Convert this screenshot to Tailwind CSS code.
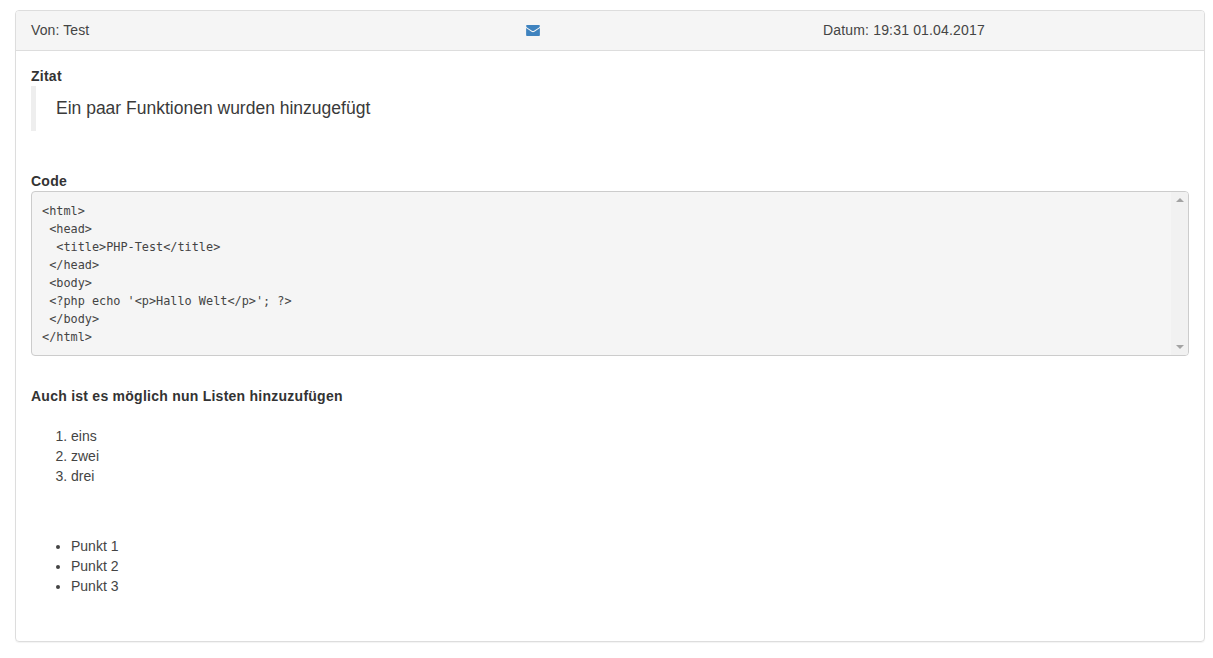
<!DOCTYPE html>
<html lang="de">
<head>
  <meta charset="UTF-8" />
  <meta name="viewport" content="width=device-width, initial-scale=1.0" />
  <title>Nachricht</title>
  <script src="https://cdn.jsdelivr.net/npm/@tailwindcss/browser@4"></script>
</head>
<body class="bg-white font-['Liberation_Sans',Arial,sans-serif] text-[14px] leading-[20px] text-[#333]">
  <div class="pt-[10px] px-[15px] pb-[16px]">
    <!-- Panel -->
    <div class="h-[632px] w-[1190px] border border-[#ddd] rounded-[4px] shadow-[0_1px_1px_rgba(0,0,0,0.05)] overflow-hidden">
      <!-- Header -->
      <div class="h-[40px] bg-[#f5f5f5] border-b border-[#ddd] px-[15px] pt-[9px] pb-[10px] grid grid-cols-[495px_297px_1fr] text-[#444]">
        <div class="tracking-[0.1px]">Von: Test</div>
        <div class="flex items-center">
          <svg class="w-[14px] h-[11px] text-[#3f83bf]" viewBox="0 0 15 12" fill="currentColor">
            <path d="M1.2 0h12.6c.7 0 1.2.5 1.2 1.1 0 .6-.4 1.2-.9 1.6L8.6 6.3c-.7.5-1.5.5-2.2 0L.9 2.700C.4 2.300 0 1.700 0 1.100 0 .5.5 0 1.200 0z" />
            <path d="M0 3.300l5.900 4c1 .7 2.200.7 3.200 0l5.900-4v7.500c0 .7-.5 1.200-1.200 1.200H1.200C.5 12 0 11.500 0 10.800z" />
          </svg>
        </div>
        <div class="tracking-[0.17px]">Datum: 19:31 01.04.2017</div>
      </div>
      <!-- Body -->
      <div class="px-[15px] pt-[15px]">
        <div class="font-bold tracking-[0.25px]">Zitat</div>
        <blockquote class="h-[45px] border-l-[5px] border-[#eee] pl-[20px] py-[10px] text-[17.5px] leading-[25px] text-[#3a3a3a]">Ein paar Funktionen wurden hinzugefügt</blockquote>

        <div class="mt-[40px] font-bold tracking-[0.25px]">Code</div>
        <div class="h-[165px] flex bg-[#f5f5f5] border border-[#ccc] rounded-[4px] overflow-hidden">
          <pre class="flex-1 pl-[10px] pt-[10px] font-['DejaVu_Sans_Mono',monospace] text-[11.85px] leading-[18px] text-[#444]">&lt;html&gt;
 &lt;head&gt;
  &lt;title&gt;PHP-Test&lt;/title&gt;
 &lt;/head&gt;
 &lt;body&gt;
 &lt;?php echo '&lt;p&gt;Hallo Welt&lt;/p&gt;'; ?&gt;
 &lt;/body&gt;
&lt;/html&gt;</pre>
          <!-- Scrollbar -->
          <div class="w-[17px] bg-[#f1f1f1] flex flex-col justify-between items-center py-[6px]">
            <svg class="w-[8px] h-[4px] text-[#a3a3a3]" viewBox="0 0 8 4" fill="currentColor"><path d="M4 0l4 4H0z" /></svg>
            <svg class="w-[8px] h-[4px] text-[#a3a3a3]" viewBox="0 0 8 4" fill="currentColor"><path d="M0 0h8L4 4z" /></svg>
          </div>
        </div>

        <div class="mt-[30px] font-bold tracking-[0.25px]">Auch ist es möglich nun Listen hinzuzufügen</div>
        <ol class="mt-[20px] pl-[40px] list-decimal text-[#444]">
          <li>eins</li>
          <li>zwei</li>
          <li>drei</li>
        </ol>
        <ul class="mt-[50px] pl-[40px] list-disc text-[#444]">
          <li>Punkt 1</li>
          <li>Punkt 2</li>
          <li>Punkt 3</li>
        </ul>
      </div>
    </div>
  </div>
</body>
</html>
